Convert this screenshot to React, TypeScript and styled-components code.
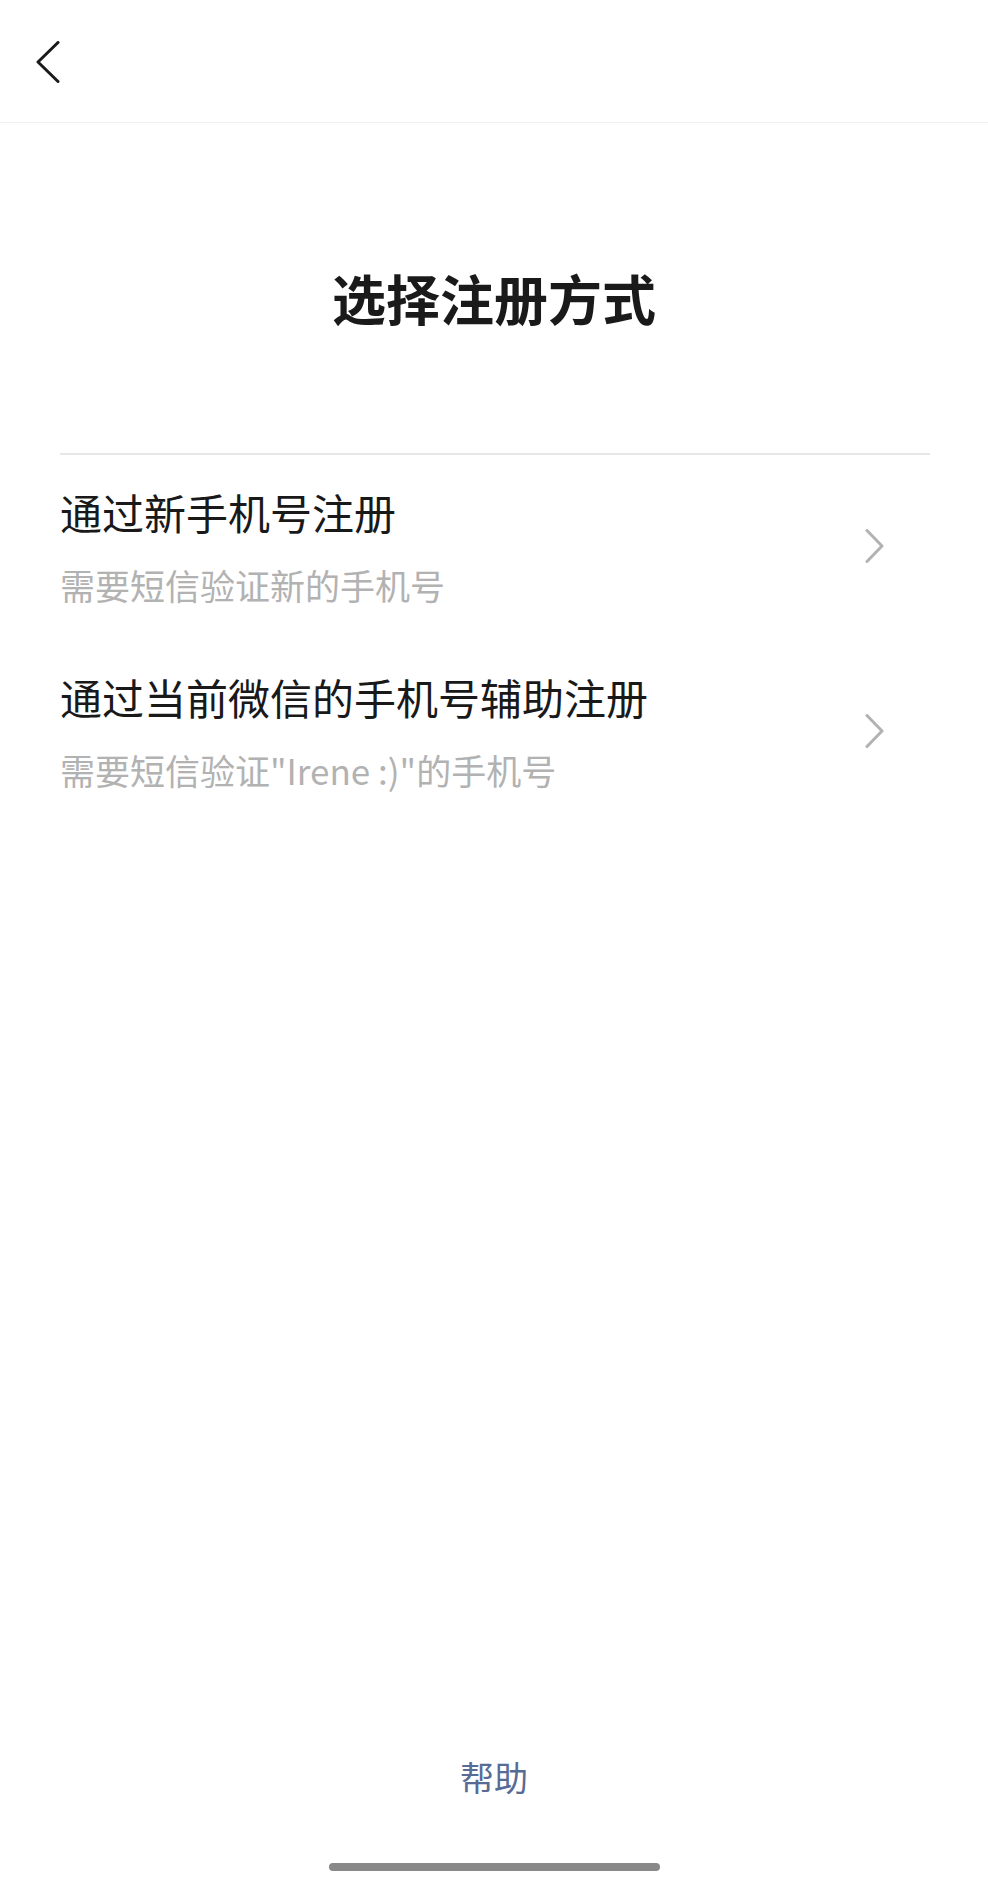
import React from "react";
import styled, { createGlobalStyle } from "styled-components";

const GlobalStyle = createGlobalStyle`
  html, body {
    margin: 0;
    padding: 0;
    background: #ffffff;
  }
  body {
    font-family: "Noto Sans CJK SC", "Noto Sans", sans-serif;
    -webkit-font-smoothing: antialiased;
  }
`;

const Page = styled.div`
  width: 988px;
  height: 1877px;
  display: flex;
  flex-direction: column;
  background: #ffffff;
  box-sizing: border-box;
`;

const Header = styled.header`
  height: 123px;
  display: flex;
  align-items: center;
  padding: 2px 0 0 36px;
  box-sizing: border-box;
  border-bottom: 1px solid #f1f1f1;
  flex-shrink: 0;
`;

const BackButton = styled.button`
  border: none;
  background: none;
  padding: 0;
  margin: 0;
  display: flex;
  cursor: pointer;
`;

const Title = styled.h1`
  margin: 137px 0 0;
  font-size: 54px;
  line-height: 76px;
  font-weight: 700;
  color: #1a1a1a;
  text-align: center;
`;

const List = styled.div`
  margin: 117px 58px 0 60px;
  border-top: 2px solid #e7e7e7;
  display: flex;
  flex-direction: column;
`;

const Row = styled.div`
  display: flex;
  align-items: center;
  padding: 28px 46px 31px 0;
  cursor: pointer;
`;

const RowText = styled.div`
  flex: 1;
  display: flex;
  flex-direction: column;
  gap: 20px;
`;

const RowTitle = styled.div`
  font-size: 42px;
  line-height: 58px;
  color: #191919;
  font-weight: 400;
`;

const RowSub = styled.div`
  font-size: 35px;
  line-height: 48px;
  color: #b2b2b2;
  font-weight: 400;
`;

const Spacer = styled.div`
  flex: 1;
`;

const Footer = styled.footer`
  display: flex;
  flex-direction: column;
  align-items: center;
  padding-bottom: 6px;
`;

const HelpLink = styled.a`
  font-size: 34px;
  line-height: 48px;
  color: #576b95;
  text-decoration: none;
  margin-bottom: 62px;
  cursor: pointer;
`;

const HomeBar = styled.div`
  width: 331px;
  height: 8px;
  border-radius: 4px;
  background: #888888;
`;

const BackIcon = () => (
  <svg width="24" height="42" viewBox="0 0 24 42" fill="none">
    <polyline
      points="22,1.5 2,21 22,40.5"
      stroke="#1a1a1a"
      strokeWidth="3"
      strokeLinecap="round"
      strokeLinejoin="round"
    />
  </svg>
);

const ChevronIcon = () => (
  <svg width="19" height="34" viewBox="0 0 19 34" fill="none">
    <polyline
      points="2,1.5 17,17 2,32.5"
      stroke="#b2b2b2"
      strokeWidth="3"
      strokeLinecap="round"
      strokeLinejoin="round"
    />
  </svg>
);

const options = [
  { title: "通过新手机号注册", sub: "需要短信验证新的手机号" },
  { title: "通过当前微信的手机号辅助注册", sub: "需要短信验证\"Irene :)\"的手机号" },
];

export default function App() {
  return (
    <>
      <GlobalStyle />
      <Page>
        <Header>
          <BackButton aria-label="返回">
            <BackIcon />
          </BackButton>
        </Header>
        <Title>选择注册方式</Title>
        <List>
          {options.map((o) => (
            <Row key={o.title}>
              <RowText>
                <RowTitle>{o.title}</RowTitle>
                <RowSub>{o.sub}</RowSub>
              </RowText>
              <ChevronIcon />
            </Row>
          ))}
        </List>
        <Spacer />
        <Footer>
          <HelpLink>帮助</HelpLink>
          <HomeBar />
        </Footer>
      </Page>
    </>
  );
}
